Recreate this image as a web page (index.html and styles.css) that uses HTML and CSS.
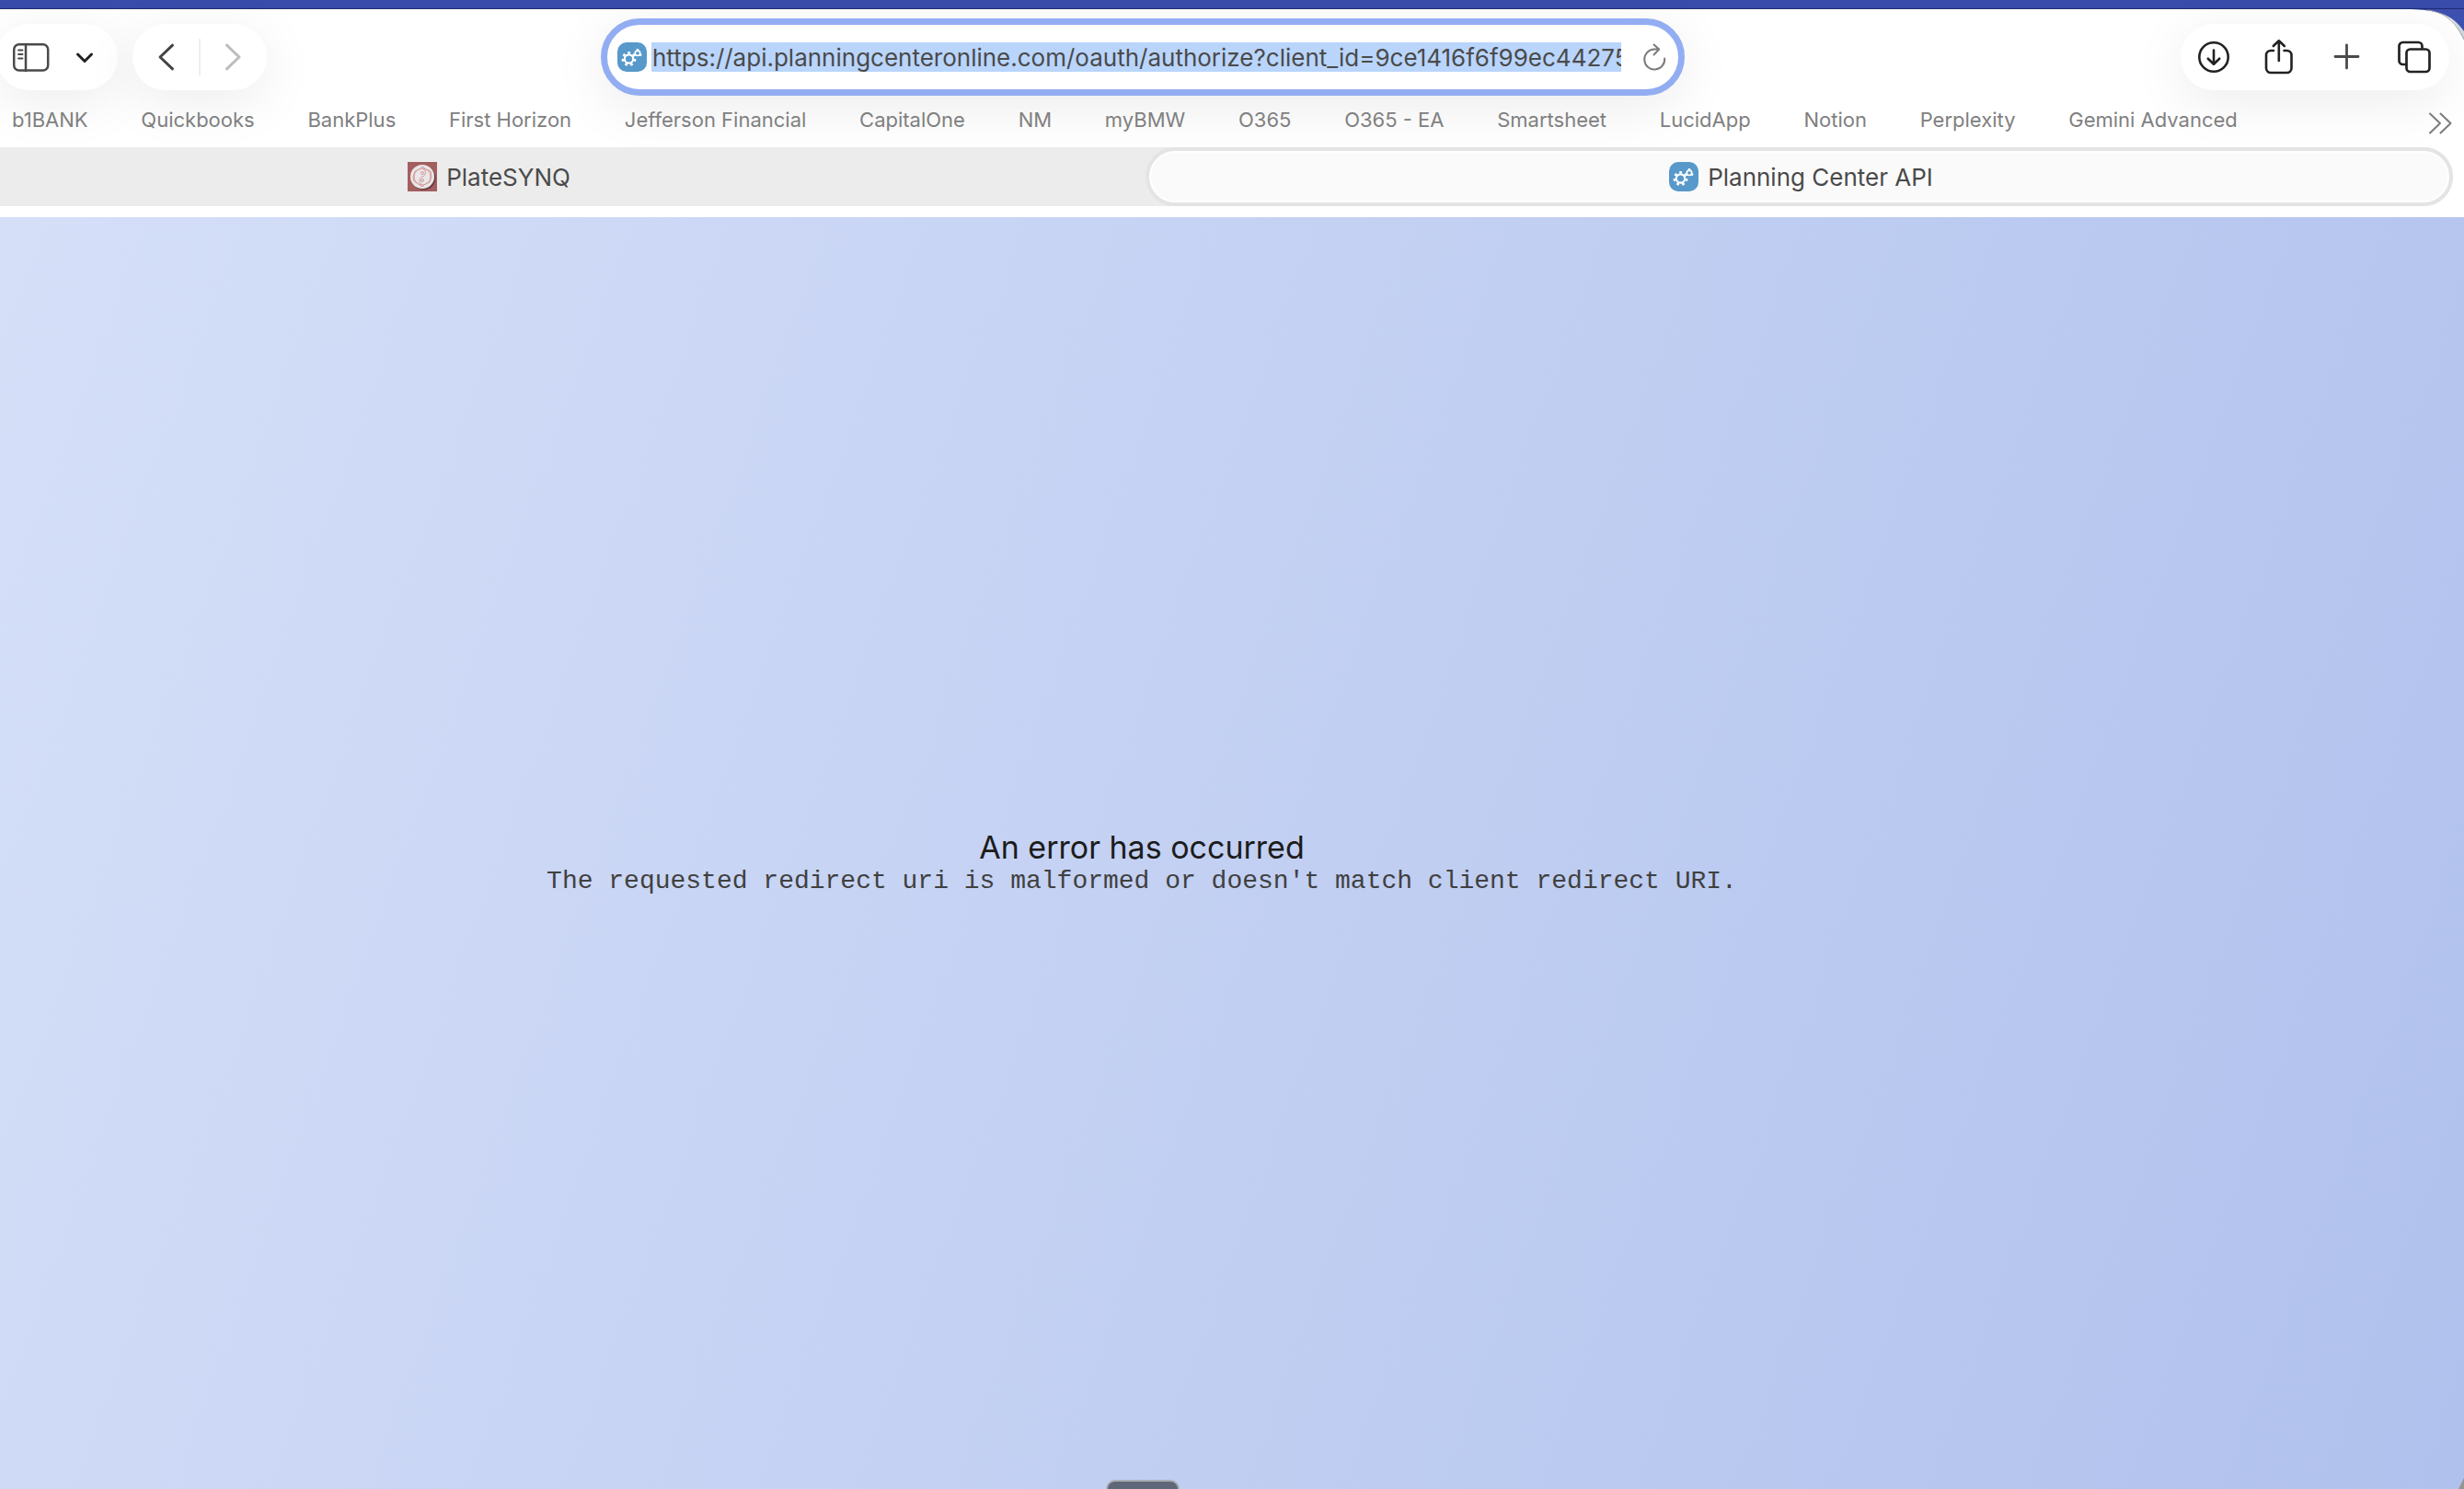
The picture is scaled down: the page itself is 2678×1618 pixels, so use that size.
FILE: index.html
```html
<!DOCTYPE html>
<html lang="en">
<head>
<meta charset="utf-8">
<title>Planning Center API</title>
<link rel="stylesheet" href="styles.css">
</head>
<body>
<svg class="defs" aria-hidden="true">
  <symbol id="gears" viewBox="0 0 32 32">
    <rect width="32" height="32" rx="10" fill="#5799ca"/>
    <g fill="none" stroke="#fff">
      <circle cx="12.500" cy="18" r="4.700" stroke-width="2.200"/>
      <circle cx="12.500" cy="18" r="6.700" stroke-width="2.400" stroke-dasharray="2.800 3.214"/>
      <circle cx="22" cy="11.800" r="2.700" stroke-width="1.700"/>
      <path d="M22 9.200V7M24.200 13l1.900 1.200M19.800 13l-1.900 1.200" stroke-width="2.400"/>
    </g>
  </symbol>
</svg>
<div class="desktop-strip"></div>
<div class="window">
  <header class="chrome">
    <div class="toolbar">
      <div class="tools-left">
        <div class="pill pill-sidebar">
          <button type="button" class="tool" aria-label="Show sidebar">
            <svg width="44" height="40" viewBox="0 0 44 40" fill="none" stroke="#4a4a4a" stroke-width="2.500" stroke-linecap="round"><rect x="3.200" y="6.200" width="37" height="28.400" rx="5.500"/><path d="M16 6v29"/><path d="M8 12.500h4.500M8 17h4.500M8 21.500h4.500" stroke-width="1.800"/></svg>
          </button>
          <button type="button" class="tool" aria-label="Tab groups">
            <svg width="24" height="24" viewBox="0 0 24 24" fill="none" stroke="#222" stroke-width="3" stroke-linecap="round" stroke-linejoin="round"><path d="M4.500 9l7.500 7.500L19.500 9"/></svg>
          </button>
        </div>
        <div class="pill">
          <button type="button" class="tool tool-wide" aria-label="Back">
            <svg width="24" height="32" viewBox="0 0 24 32" fill="none" stroke="#444" stroke-width="3" stroke-linecap="round" stroke-linejoin="round"><path d="M19.500 3.200L6 16l13.500 12.800"/></svg>
          </button>
          <span class="divider"></span>
          <button type="button" class="tool tool-wide" aria-label="Forward">
            <svg width="24" height="32" viewBox="0 0 24 32" fill="none" stroke="#bdbdbd" stroke-width="3" stroke-linecap="round" stroke-linejoin="round"><path d="M4.500 3.200L18 16 4.500 28.800"/></svg>
          </button>
        </div>
      </div>
      <form class="address">
        <svg class="favicon" aria-hidden="true"><use href="#gears"/></svg>
        <input class="address-input" type="text" aria-label="Address" value="https://api.planningcenteronline.com/oauth/authorize?client_id=9ce1416f6f99ec44275c">
        <button type="button" class="tool reload" aria-label="Reload">
          <svg width="28" height="32" viewBox="0 0 28 32" fill="none" stroke="#7c7c7c" stroke-width="2" stroke-linecap="round" stroke-linejoin="round"><path d="M25.200 17.500A11 11 0 1 1 14.200 7.500h4.500M13.500 2.500l5.700 5-5.700 6"/></svg>
        </button>
      </form>
      <div class="tools-right">
        <div class="pill pill-actions">
          <button type="button" class="tool tool-wide" aria-label="Downloads">
            <svg width="40" height="40" viewBox="0 0 40 40" fill="none" stroke="#222" stroke-width="2.600" stroke-linecap="round" stroke-linejoin="round"><circle cx="20" cy="20" r="15.700"/><path d="M20 12.500v15M13.800 21.700l6.200 6 6.200-6"/></svg>
          </button>
          <button type="button" class="tool tool-wide" aria-label="Share">
            <svg width="40" height="40" viewBox="0 0 40 40" fill="none" stroke="#222" stroke-width="2.600" stroke-linecap="round" stroke-linejoin="round"><path d="M13 13H10a5 5 0 0 0-5 5v14a5 5 0 0 0 5 5h17.500a5 5 0 0 0 5-5V18a5 5 0 0 0-5-5h-3M18.800 24V2.800M12.800 8l6-5.700 6 5.700"/></svg>
          </button>
          <button type="button" class="tool tool-wide" aria-label="New tab">
            <svg width="40" height="40" viewBox="0 0 40 40" fill="none" stroke="#4a4a4a" stroke-width="2.800" stroke-linecap="round"><path d="M20.500 7v25M8 19.500h25"/></svg>
          </button>
          <button type="button" class="tool tool-wide" aria-label="Tab overview">
            <svg width="40" height="40" viewBox="0 0 40 40" fill="none" stroke="#222" stroke-width="2.700" stroke-linejoin="round" stroke-linecap="round"><path d="M12 28H9.500a4 4 0 0 1-4-4V8a4 4 0 0 1 4-4h17a4 4 0 0 1 4 4v2"/><rect x="13.500" y="11.500" width="25" height="24.500" rx="4"/></svg>
          </button>
        </div>
      </div>
    </div>
    <nav class="bookmarks" aria-label="Favorites">
      <div class="bookmark-list">
        <a href="#">b1BANK</a>
        <a href="#">Quickbooks</a>
        <a href="#">BankPlus</a>
        <a href="#">First Horizon</a>
        <a href="#">Jefferson Financial</a>
        <a href="#">CapitalOne</a>
        <a href="#">NM</a>
        <a href="#">myBMW</a>
        <a href="#">O365</a>
        <a href="#">O365 - EA</a>
        <a href="#">Smartsheet</a>
        <a href="#">LucidApp</a>
        <a href="#">Notion</a>
        <a href="#">Perplexity</a>
        <a href="#">Gemini Advanced</a>
      </div>
      <button type="button" class="tool" aria-label="More bookmarks">
        <svg width="28" height="28" viewBox="0 0 28 28" fill="none" stroke="#7c7c7c" stroke-width="2" stroke-linecap="round" stroke-linejoin="round"><path d="M3 3.500L14 14 3 24.500M14.500 3.500L25.500 14l-11 10.500"/></svg>
      </button>
    </nav>
    <div class="tabs" role="tablist">
      <button type="button" class="tab tab-first" role="tab" aria-selected="false">
        <svg width="32" height="32" viewBox="0 0 32 32" aria-hidden="true"><rect width="32" height="32" fill="#a35f5f"/><circle cx="17.500" cy="17.500" r="13" fill="#6d3d40"/><circle cx="16" cy="16" r="13" fill="#e9e7e9"/><g fill="none" stroke="#d59a9a" stroke-width="1"><circle cx="16" cy="16" r="9"/><path d="M16 5l4 3 5 2 1 6-2 6-5 2-3 3-4-3-5-3-1-5 2-6 5-2zM16 7c5 2 4 8 0 9s-4 7 0 9"/><circle cx="16" cy="12" r="1.500"/><circle cx="16" cy="20" r="1.500"/></g></svg>
        <span>PlateSYNQ</span>
      </button>
      <button type="button" class="tab tab-active" role="tab" aria-selected="true">
        <svg class="favicon" aria-hidden="true"><use href="#gears"/></svg>
        <span>Planning Center API</span>
      </button>
    </div>
  </header>
  <main class="page">
    <h1 class="error-title">An error has occurred</h1>
    <p class="error-text">The requested redirect uri is malformed or doesn't match client redirect URI.</p>
    <span class="dock-handle"></span>
  </main>
  <svg class="corner-top" width="58" height="34" viewBox="0 0 58 34" aria-hidden="true"><path d="M0 0Q28 0 38 6Q50 13 58 33V22Q50 10 38 6Q26 1 0 0" fill="#cfd5d9"/><path d="M0 0C24 1 44 3 58 24V0z" fill="#3d50b0"/><path d="M18 1C36 3 48 12 58 33" fill="none" stroke="#969ca3" stroke-width="1"/></svg>
  <svg class="corner-bottom" width="6" height="12" viewBox="0 0 6 12" aria-hidden="true"><path d="M6 0L0 12h6z" fill="#96958f"/></svg>
</div>
</body>
</html>
```
FILE: styles.css
```css
* {
  box-sizing: border-box;
}

body {
  margin: 0;
  min-height: 100vh;
  display: flex;
  flex-direction: column;
  overflow: hidden;
  font-family: Inter, "Liberation Sans", sans-serif;
  color: #444;
}

.defs {
  position: absolute;
  width: 0;
  height: 0;
}

.desktop-strip {
  height: 10px;
  background: #394cab;
  border-bottom: 1px solid #1f2c74;
}

.window {
  position: relative;
  flex: 1;
  display: flex;
  flex-direction: column;
  background: #fff;
}

/* Toolbar */

.toolbar {
  display: grid;
  grid-template-columns: 653fr 1178fr 847fr;
  align-items: center;
  height: 104px;
}

.tools-left {
  display: flex;
  gap: 16px;
  margin-left: -4px;
}

.tools-right {
  display: flex;
  justify-content: flex-end;
  padding-right: 16px;
}

.pill {
  display: flex;
  align-items: center;
  height: 72px;
  border-radius: 36px;
  background: #fff;
  box-shadow: 0 12px 60px rgba(0, 0, 0, 0.08);
}

.pill-sidebar {
  gap: 24px;
  padding: 0 24px 0 16px;
}

.pill-actions {
  padding-right: 4px;
}

.tool {
  display: flex;
  align-items: center;
  justify-content: center;
  padding: 0;
  border: 0;
  background: none;
}

.tool-wide {
  width: 72px;
  height: 72px;
}

.divider {
  width: 2px;
  height: 40px;
  background: #eee;
}

.address {
  display: flex;
  align-items: center;
  height: 84px;
  padding: 0 12px 0 11px;
  border: 7px solid #93adf3;
  border-radius: 42px;
  background: #fff;
  box-shadow: 0 12px 60px rgba(0, 0, 0, 0.08);
}

.favicon {
  flex: none;
  width: 32px;
  height: 32px;
}

.address-input {
  flex: 1;
  min-width: 0;
  height: 32px;
  margin-left: 5px;
  padding: 1px 0 0 1px;
  border: 0;
  outline: 0;
  background: #b9d5fc;
  color: #4a4a4a;
  font: 26px/31px Inter, "Liberation Sans", sans-serif;
}

.reload {
  margin-left: 22px;
}

/* Bookmarks */

.bookmarks {
  position: relative;
  display: flex;
  align-items: flex-start;
  justify-content: space-between;
  height: 46px;
  padding: 2px 12px 0 13px;
}

.bookmark-list {
  display: flex;
  justify-content: space-between;
  flex: 0 1 2419px;
}

.bookmarks a {
  color: #808080;
  font-size: 22px;
  line-height: 28px;
  text-decoration: none;
  white-space: nowrap;
}

.bookmarks .tool {
  padding-top: 4px;
}

/* Tabs */

.tabs {
  display: grid;
  grid-template-columns: 1245fr 1421fr;
  margin: 0 12px 12px 0;
  border-radius: 0 32px 32px 0;
  background: #ececec;
}

.tab {
  display: flex;
  align-items: center;
  justify-content: center;
  gap: 10px;
  height: 64px;
  padding: 0;
  border: 0;
  background: none;
  color: #4a4a4a;
  font: 26px/32px Inter, "Liberation Sans", sans-serif;
}

.tab span {
  padding-top: 2px;
}

.tab-first {
  padding-right: 182px;
}

.tab-active {
  padding-left: 4px;
  border: 4px solid #e4e4e4;
  border-radius: 32px;
  background: #fafafa;
  box-shadow: inset 0 0 0 2px #fff;
}

/* Page */

.page {
  position: relative;
  flex: 1;
  display: flex;
  flex-direction: column;
  align-items: center;
  justify-content: center;
  padding: 20px 196px 0 0;
  background: linear-gradient(110deg, #d5dff8, #b0c1ed);
}

.error-title {
  margin: 0;
  color: #1c1c1c;
  font-size: 34px;
  font-weight: 400;
  line-height: 42px;
}

.error-text {
  margin: 0;
  color: #404040;
  font: 28px/32px "Courier New", "Liberation Mono", monospace;
}

.dock-handle {
  position: absolute;
  bottom: 0;
  left: 1202px;
  width: 80px;
  height: 10px;
  border: 2px solid #a9adb4;
  border-bottom: 0;
  border-radius: 10px 10px 0 0;
  background: #5f6779;
}

/* Rounded window corners over the desktop */

.corner-top {
  position: absolute;
  top: 0;
  right: 0;
}

.corner-bottom {
  position: absolute;
  right: 0;
  bottom: 0;
}
```
